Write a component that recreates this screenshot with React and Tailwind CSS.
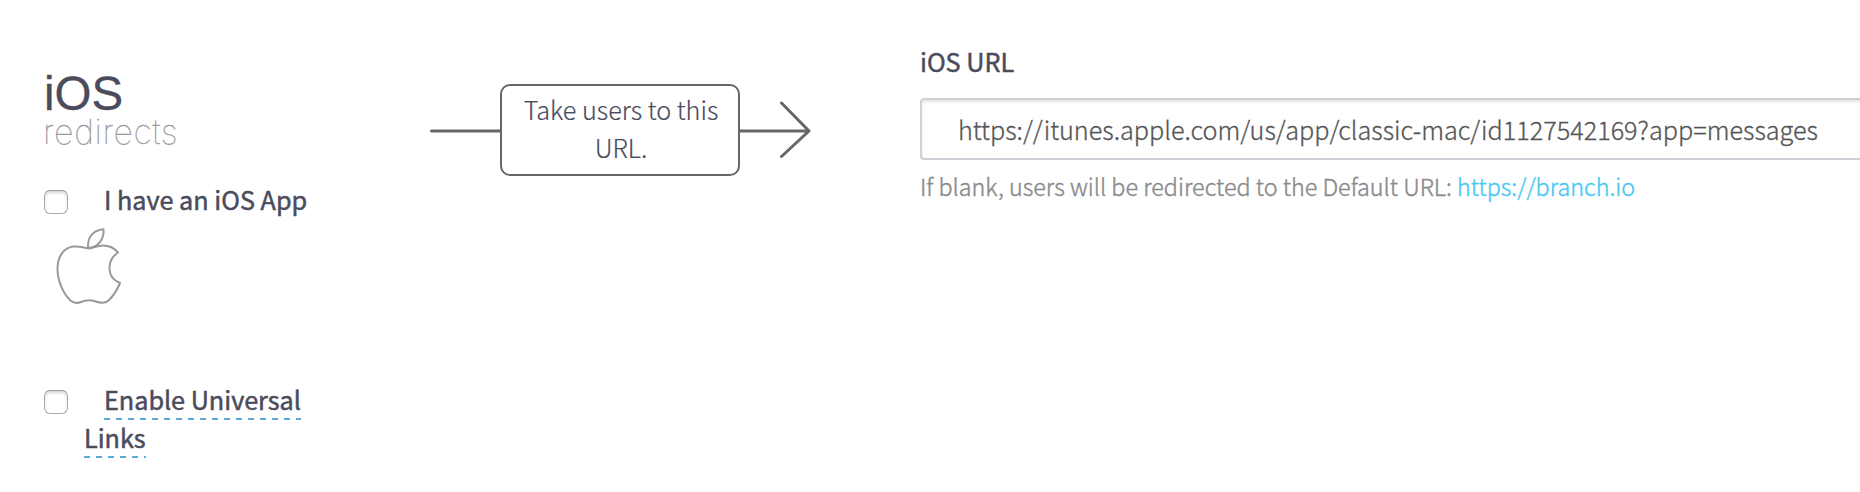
function Checkbox() {
  return (
    <span
      role="checkbox"
      aria-checked="false"
      className="block size-6 shrink-0 rounded-[6px] border border-[#ababab] border-t-[#949494] bg-white shadow-[inset_0_2px_3px_rgba(0,0,0,0.16)]"
    />
  );
}

function AppleIcon() {
  return (
    <svg
      className="block h-[78px] w-[66px]"
      viewBox="0 0 66 78"
      fill="none"
      stroke="#999999"
      strokeWidth="2"
      strokeLinejoin="round"
    >
      <path d="M33 20.5C24 18.7 21.5 18 17 18.6C7.500 20 1.500 28.500 1.500 41C1.500 53 7.500 66 14.500 72.500C18 75.500 21 75.600 25 74C30.500 71.700 34 71.700 39 73.200C44 74.800 48.500 76 52.500 72.500C58 67.500 61.500 61 64 55C57 52 53.200 46 53.500 39.500C53.600 33 57 28 62 24.500C57.500 19 53 17.500 47 17.500C41.500 17.500 38 19.500 33 20.500Z" />
      <path d="M32 20C31.500 8.500 37.500 2.200 47.500 1.200C48.500 11 42 19.500 32 20Z" />
    </svg>
  );
}

const strong = "text-[25.2px] leading-[38px] font-normal [-webkit-text-stroke:0.5px]";
const dashed =
  "inline-block bg-[image:repeating-linear-gradient(90deg,#5aa9d6_0_6px,transparent_6px_12px)] bg-[length:100%_2px] bg-bottom bg-no-repeat";

function Sidebar() {
  return (
    <section className="w-[386px] shrink-0 pt-[68px] text-[#4a4b5c]">
      <h1 className="h-[46px] font-['Liberation_Sans',sans-serif] text-[47.5px] leading-[51px] [-webkit-text-stroke:0.3px]">
        iOS
      </h1>
      <p className="-ml-px h-[36px] font-['Inter',sans-serif] text-[34px] leading-[36px] font-thin tracking-[0.6px] text-[#999999] [-webkit-text-stroke:0.3px]">
        redirects
      </p>
      <label className={`mt-[32px] flex h-[38px] items-start gap-9 ${strong}`}>
        <span className="pt-2">
          <Checkbox />
        </span>
        <span className="-mt-0.5 whitespace-nowrap">I have an iOS App</span>
      </label>
      <div className="mt-2 pl-3">
        <AppleIcon />
      </div>
      <label className={`mt-[74px] flex items-start ${strong}`}>
        <span className="pt-[10px]">
          <Checkbox />
        </span>
        <span className="flex flex-col items-start pl-4 whitespace-nowrap">
          <span className="h-[38px] pl-5">
            <span className={`h-10 ${dashed}`}>Enable Universal</span>
          </span>
          <span className={`h-10 ${dashed}`}>Links</span>
        </span>
      </label>
    </section>
  );
}

function ActionArrow() {
  return (
    <section className="flex w-[490px] shrink-0 items-start pt-[84px]">
      <svg className="mt-[30px] h-8 w-[70px]" viewBox="0 0 70 32" stroke="#666666" strokeWidth="3" strokeLinecap="round">
        <path d="M1.500 17H72" />
      </svg>
      <div className="h-[92px] w-[240px] rounded-[10px] border-2 border-[#666666] bg-white pr-[19px] pl-[21px] pt-[4px] text-center text-[25.2px] leading-[38px] font-light text-[#4a4b5c] [-webkit-text-stroke:0.2px]">
        <p className="whitespace-nowrap">Take users to this</p>
        <p>URL.</p>
      </div>
      <svg
        className="mt-[16px] h-[60px] w-[72px]"
        viewBox="0 0 72 60"
        fill="none"
        stroke="#666666"
        strokeWidth="3"
        strokeLinecap="round"
        strokeLinejoin="round"
      >
        <path d="M0 31H69M41.500 3L69 31L41.500 56.500" />
      </svg>
    </section>
  );
}

function UrlField() {
  return (
    <section className="min-w-0 flex-1 pt-[42px]">
      <h2 className={`h-[56px] text-[#4a4b5c] ${strong}`}>iOS URL</h2>
      <div className="-mr-2 flex h-[62px] items-center rounded-l-[4px] border-2 border-r-0 border-[#d0d0d8] pl-9 text-[25.2px] leading-[38px] font-light whitespace-nowrap text-[#555555] shadow-[inset_0_2px_3px_rgba(0,0,0,0.1)] [-webkit-text-stroke:0.3px]">
        https://itunes.apple.com/us/app/classic-mac/id1127542169?app=messages
      </div>
      <p className="mt-[7px] text-[23.35px] leading-[38px] font-light whitespace-nowrap text-[#8a8a8a] [-webkit-text-stroke:0.4px]">
        If blank, users will be redirected to the Default URL: <a className="text-[#4ac9f0]">https://branch.io</a>
      </p>
    </section>
  );
}

export default function App() {
  return (
    <main className="flex h-[492px] w-[1860px] overflow-hidden bg-white pl-11 font-['Noto_Sans_CJK_SC',sans-serif]">
      <Sidebar />
      <ActionArrow />
      <UrlField />
    </main>
  );
}
